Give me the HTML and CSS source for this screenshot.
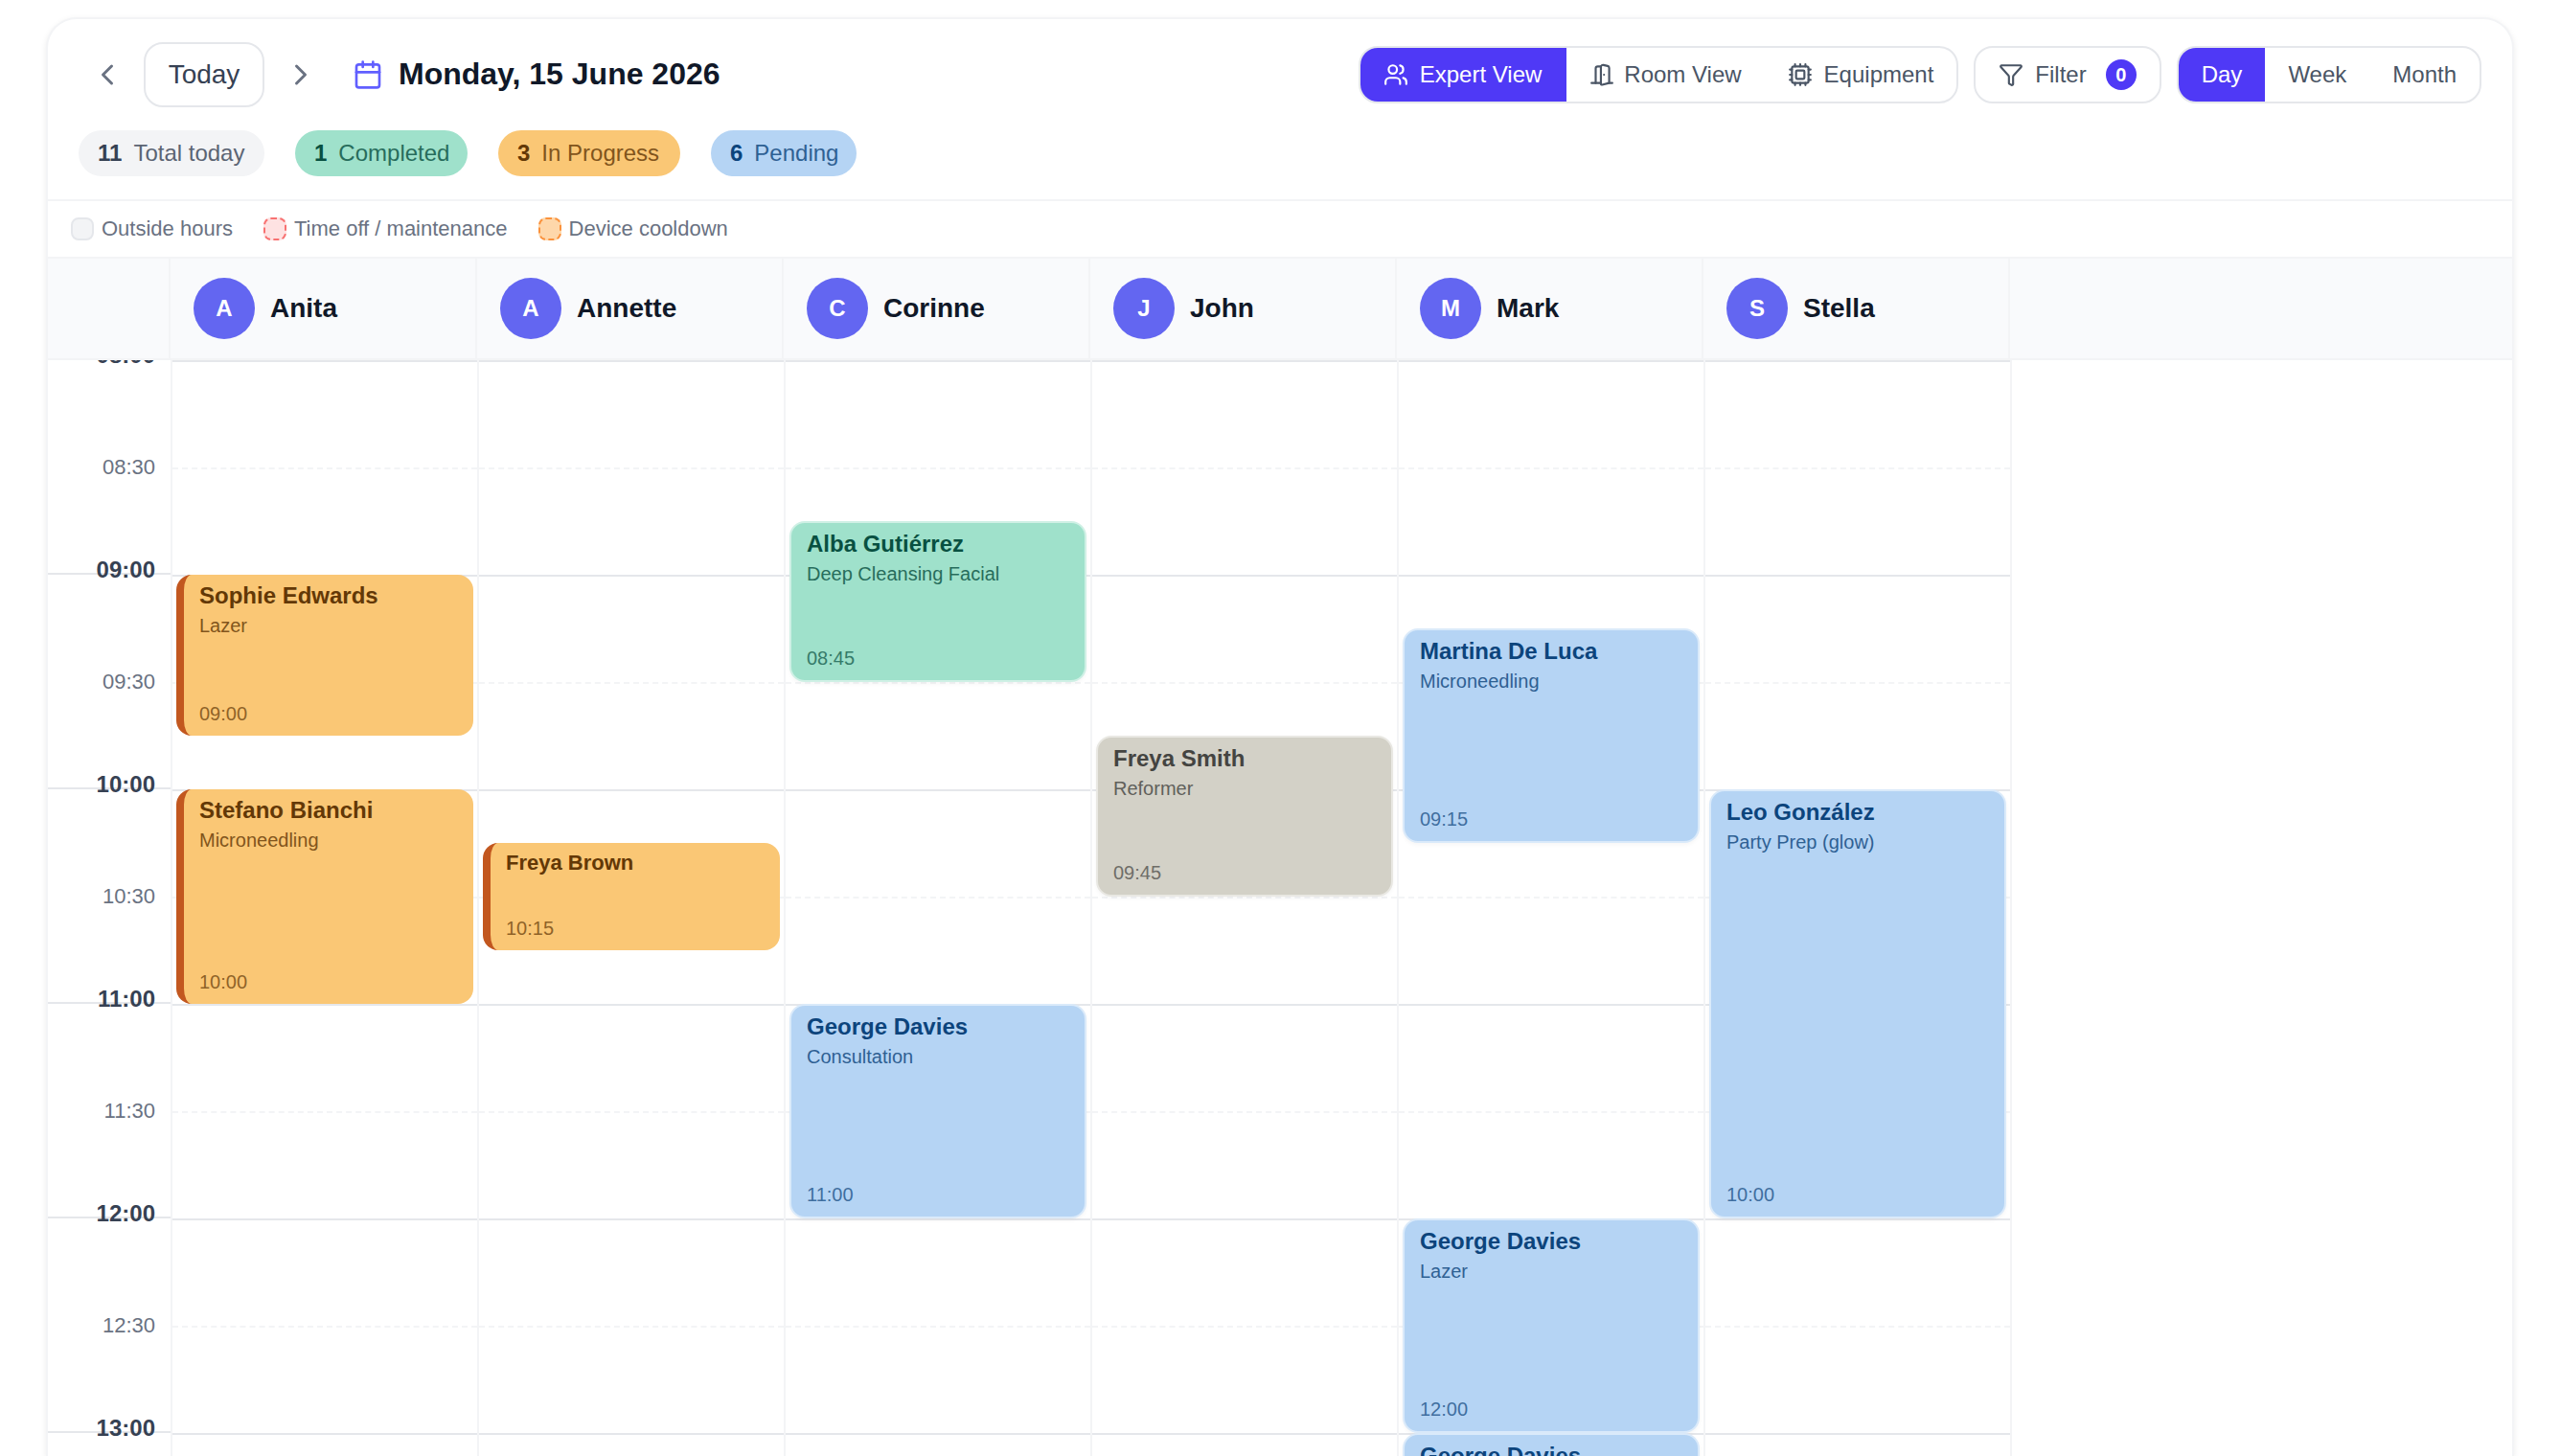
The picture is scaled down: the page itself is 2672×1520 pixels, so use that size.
FILE: index.html
```html
<!DOCTYPE html>
<html lang="en">
<head>
	<meta charset="utf-8">
	<title>Calendar</title>
	<link rel="stylesheet" href="styles.css">
</head>
<body>
	<div class="calendar">
		<div class="top">
			<div class="toolbar">
				<div class="nav">
					<button class="btnNav" type="button">
						<svg width="36" height="36" viewBox="0 0 24 24"><path d="m15 18-6-6 6-6"/></svg>
					</button>
					<button class="btnToday" type="button">Today</button>
					<button class="btnNav" type="button">
						<svg width="36" height="36" viewBox="0 0 24 24"><path d="m9 18 6-6-6-6"/></svg>
					</button>
					<div class="currentDate">
						<svg width="32" height="32" viewBox="0 0 24 24"><path d="M8 2v4"/><path d="M16 2v4"/><rect width="18" height="18" x="3" y="4" rx="2"/><path d="M3 10h18"/></svg>
						<h1>Monday, 15 June 2026</h1>
					</div>
				</div>
				<div class="controls">
					<div class="group">
						<button class="btnExpert active" type="button">
							<svg width="26" height="26" viewBox="0 0 24 24"><path d="M16 21v-2a4 4 0 0 0-4-4H6a4 4 0 0 0-4 4v2"/><circle cx="9" cy="7" r="4"/><path d="M22 21v-2a4 4 0 0 0-3-3.87"/><path d="M16 3.13a4 4 0 0 1 0 7.75"/></svg>
							Expert View
						</button>
						<button class="btnRoom" type="button">
							<svg width="26" height="26" viewBox="0 0 24 24"><path d="M11 20H2"/><path d="M11 4.562v16.157a1 1 0 0 0 1.242.97L19 20V5.562a2 2 0 0 0-1.515-1.94l-4-1A2 2 0 0 0 11 4.561z"/><path d="M11 4H8a2 2 0 0 0-2 2v14"/><path d="M14 12h.01"/><path d="M22 20h-3"/></svg>
							Room View
						</button>
						<button type="button">
							<svg width="26" height="26" viewBox="0 0 24 24"><rect width="16" height="16" x="4" y="4" rx="2"/><rect width="8" height="8" x="8" y="8" rx="1"/><path d="M12 20v2M12 2v2M17 20v2M17 2v2M2 12h2M2 17h2M2 7h2M20 12h2M20 17h2M20 7h2M7 20v2M7 2v2"/></svg>
							Equipment
						</button>
					</div>
					<div class="group">
						<button type="button">
							<svg width="26" height="26" viewBox="0 0 24 24"><path d="M10 20a1 1 0 0 0 .553.895l2 1A1 1 0 0 0 14 21v-7a2 2 0 0 1 .517-1.341L21.74 4.67A1 1 0 0 0 21 3H3a1 1 0 0 0-.742 1.67l7.225 7.989A2 2 0 0 1 10 14z"/></svg>
							Filter
							<span class="count">0</span>
						</button>
					</div>
					<div class="group">
						<button class="active" type="button">Day</button>
						<button type="button">Week</button>
						<button type="button">Month</button>
					</div>
				</div>
			</div>
			<div class="stats">
				<div class="pill"><b>11</b><span>Total today</span></div>
				<div class="pill completed"><b>1</b><span>Completed</span></div>
				<div class="pill progress"><b>3</b><span>In Progress</span></div>
				<div class="pill pending"><b>6</b><span>Pending</span></div>
			</div>
		</div>
		<div class="legend">
			<div><i class="swatch"></i>Outside hours</div>
			<div><i class="swatch timeOff"></i>Time off / maintenance</div>
			<div><i class="swatch cooldown"></i>Device cooldown</div>
		</div>
		<div class="experts" id="experts">
			<div class="corner"></div>
		</div>
		<div class="grid" id="grid">
			<div class="gutter" id="gutter"></div>
		</div>
	</div>
	<script>
		var START = 8;
		var END = 14;
		var HOUR = 224;

		var experts = [
			{name: 'Anita', items: [
				{client: 'Sophie Edwards', service: 'Lazer', time: '09:00', min: 45, status: 'progress'},
				{client: 'Stefano Bianchi', service: 'Microneedling', time: '10:00', min: 60, status: 'progress'},
			]},
			{name: 'Annette', items: [
				{client: 'Freya Brown', service: '', time: '10:15', min: 30, status: 'progress'},
			]},
			{name: 'Corinne', items: [
				{client: 'Alba Gutiérrez', service: 'Deep Cleansing Facial', time: '08:45', min: 45, status: 'completed'},
				{client: 'George Davies', service: 'Consultation', time: '11:00', min: 60, status: 'pending'},
			]},
			{name: 'John', items: [
				{client: 'Freya Smith', service: 'Reformer', time: '09:45', min: 45, status: 'closed'},
			]},
			{name: 'Mark', items: [
				{client: 'Martina De Luca', service: 'Microneedling', time: '09:15', min: 60, status: 'pending'},
				{client: 'George Davies', service: 'Lazer', time: '12:00', min: 60, status: 'pending'},
				{client: 'George Davies', service: 'Lazer', time: '13:00', min: 60, status: 'pending'},
			]},
			{name: 'Stella', items: [
				{client: 'Leo González', service: 'Party Prep (glow)', time: '10:00', min: 120, status: 'pending'},
			]},
		];

		function createItem(obj){
			var parts = obj.time.split(':');
			var start = Number(parts[0]) + Number(parts[1]) / 60 - START;
			var div = document.createElement('div');
			div.className = 'event ' + obj.status + (obj.min <= 30 ? ' short' : '');
			div.style.top = (start * HOUR) + 'px';
			div.style.height = (obj.min / 60 * HOUR) + 'px';
			div.innerHTML = [
				'<b>'+obj.client+'</b>',
				obj.service ? '<span>'+obj.service+'</span>' : '',
				'<time>'+obj.time+'</time>',
			].join('');
			return div;
		}

		var slots = '';
		var labels = '';
		for(var h = START; h < END; h++){
			var hh = (h < 10 ? '0' : '') + h;
			slots += '<div class="slot"></div><div class="slot half"></div>';
			labels += '<div class="label"><b>'+hh+':00</b></div><div class="label half"><span>'+hh+':30</span></div>';
		}
		document.querySelector('#gutter').innerHTML = labels;

		experts.map(function(obj){
			var head = document.createElement('div');
			head.className = 'expert';
			head.innerHTML = '<span class="avatar">'+obj.name[0]+'</span><b>'+obj.name+'</b>';
			document.querySelector('#experts').appendChild(head);

			var col = document.createElement('div');
			col.className = 'column';
			col.innerHTML = slots;
			obj.items.map(item => col.appendChild(createItem(item)));
			document.querySelector('#grid').appendChild(col);
		});
	</script>
</body>
</html>
```
FILE: styles.css
```css
* {
	box-sizing: border-box;
}
body {
	margin: 0;
	height: 1520px;
	overflow: hidden;
	padding: 18px 48px 0;
	background-color: #fff;
	font-family: "Liberation Sans", Arial, sans-serif;
	color: #101828;
}
button {
	font-family: inherit;
	border: 0 none;
	background: none;
	cursor: pointer;
}
svg {
	display: block;
	flex: none;
	fill: none;
	stroke: currentColor;
	stroke-width: 2;
	stroke-linecap: round;
	stroke-linejoin: round;
}
.calendar {
	height: 1502px;
	overflow: hidden;
	border: 2px solid #f3f4f6;
	border-bottom: 0 none;
	border-radius: 32px 32px 0 0;
	background-color: #fff;
	box-shadow: 0 2px 6px rgba(0,0,0, 0.08);
}

/* toolbar */
.top {
	padding: 24px 32px;
	border-bottom: 2px solid #f3f4f6;
}
.toolbar {
	display: flex;
	justify-content: space-between;
	align-items: center;
	height: 68px;
}
.nav, .controls, .currentDate, .stats, .legend, .legend > div {
	display: flex;
	align-items: center;
}
.nav {
	gap: 8px;
}
.btnNav {
	padding: 12px;
	color: #6a7282;
}
.btnToday {
	width: 126px;
	height: 68px;
	padding: 0;
	font-size: 28px;
	color: #364153;
	border: 2px solid #e5e7eb;
	border-radius: 20px;
}
.currentDate {
	gap: 16px;
	margin-left: 16px;
}
.currentDate svg {
	color: #615fff;
}
.currentDate h1 {
	margin: 0;
	padding-bottom: 2px;
	font-size: 32px;
	line-height: 40px;
}
.controls {
	gap: 16px;
}
.group {
	display: flex;
	height: 60px;
	overflow: hidden;
	border: 2px solid #e5e7eb;
	border-radius: 20px;
}
.group button {
	display: flex;
	align-items: center;
	gap: 12px;
	padding: 0 24px;
	font-size: 24px;
	color: #4a5565;
}
.group button.btnExpert {
	padding-right: 26px;
}
.group button.btnRoom {
	gap: 10px;
}
.group button.active {
	background-color: #4f39f6;
	color: white;
}
.count {
	width: 32px;
	height: 32px;
	margin-left: 8px;
	line-height: 32px;
	border-radius: 50%;
	font-size: 20px;
	font-weight: bold;
	text-align: center;
	background-color: #4f39f6;
	color: white;
}

/* day totals */
.stats {
	gap: 32px;
	margin-top: 24px;
}
.pill {
	display: flex;
	align-items: center;
	gap: 12px;
	height: 48px;
	width: 194px;
	padding: 0 0 0 20px;
	border-radius: 24px;
	font-size: 24px;
	background-color: #f3f4f6;
	color: #364153;
}
.pill.completed {
	width: 180px;
}
.pill.progress {
	width: 190px;
}
.pill.pending {
	width: 152px;
}
.pill span {
	opacity: 0.8;
}

/* status colours, shared by pills and events */
.completed {
	background-color: #9fe1cb;
	border-color: #cff0e5;
	color: #085041;
}
.progress {
	background-color: #fac775;
	color: #633806;
}
.pending {
	background-color: #b5d4f4;
	border-color: #daeafa;
	color: #0c447c;
}
.closed {
	background-color: #d3d1c7;
	border-color: #e9e8e3;
	color: #444441;
}

.legend {
	gap: 32px;
	height: 60px;
	padding: 0 24px;
	font-size: 22px;
	color: #6a7282;
	border-bottom: 2px solid #f3f4f6;
}
.legend > div {
	gap: 8px;
}
.swatch {
	width: 24px;
	height: 24px;
	border: 2px solid #e5e7eb;
	border-radius: 8px;
	background-color: #f3f4f6;
}
.swatch.timeOff {
	border: 2px dashed #f87171;
	background-color: #fee2e2;
}
.swatch.cooldown {
	border: 2px dashed #fb923c;
	background-color: #fed7aa;
}

/* column heads */
.experts {
	display: flex;
	height: 106px;
	background-color: #f9fafc;
	border-bottom: 2px solid #f3f4f6;
}
.corner {
	width: 128px;
	border-right: 2px solid #f3f4f6;
}
.expert {
	display: flex;
	align-items: center;
	gap: 16px;
	width: 320px;
	padding: 0 24px;
	border-right: 2px solid #f3f4f6;
	font-size: 28px;
}
.avatar {
	width: 64px;
	height: 64px;
	line-height: 64px;
	border-radius: 50%;
	font-size: 24px;
	font-weight: bold;
	text-align: center;
	background-color: #6366f1;
	color: white;
}

/* time grid */
.grid {
	display: flex;
	height: 1144px;
	overflow: hidden;
}
.gutter {
	width: 130px;
	border-right: 2px solid #f3f4f6;
}
.label {
	display: flow-root;
	height: 112px;
	padding-right: 16px;
	text-align: right;
	line-height: 28px;
}
.label.half {
	border-bottom: 2px solid #e5e7eb;
}
.label b {
	display: block;
	margin-top: -19px;
	font-size: 24px;
	color: #364153;
}
.label span {
	display: block;
	margin-top: -14px;
	font-size: 22px;
	color: #6a7282;
}
.column {
	position: relative;
	width: 320px;
	border-right: 2px solid #f3f4f6;
}
.slot {
	height: 112px;
	border-top: 2px solid #e5e7eb;
}
.slot.half {
	border-top: 2px dashed #f3f4f6;
}
.event {
	position: absolute;
	left: 4px;
	right: 4px;
	display: flex;
	flex-direction: column;
	padding: 8px 16px 12px;
	border-width: 2px;
	border-style: solid;
	border-radius: 16px;
	box-shadow: 0 2px 4px rgba(0,0,0, 0.04);
}
.event.progress {
	border-width: 0 0 0 8px;
	border-color: #c2571f;
	box-shadow: none;
}
.event b {
	font-size: 24px;
	line-height: 27px;
}
.event.short b {
	font-size: 22px;
	line-height: 25px;
}
.event span {
	margin-top: 6px;
	font-size: 20px;
	line-height: 24px;
	opacity: 0.8;
}
.event time {
	margin-top: auto;
	font-size: 20px;
	line-height: 22px;
	opacity: 0.7;
}
```
